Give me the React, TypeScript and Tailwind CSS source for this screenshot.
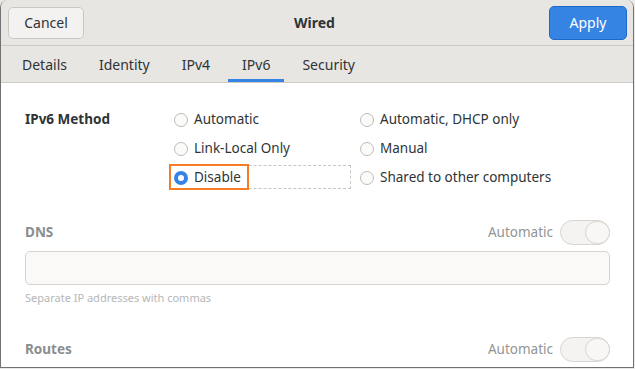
import React from 'react'

const font = { fontFamily: '"Noto Sans", "DejaVu Sans", sans-serif' }

const Radio = ({ checked }: { checked?: boolean }) =>
  checked ? (
    <span className="w-[14px] h-[14px] rounded-full bg-[#3584e4] flex items-center justify-center shrink-0">
      <span className="w-[6px] h-[6px] rounded-full bg-white" />
    </span>
  ) : (
    <span className="w-[14px] h-[14px] rounded-full border border-[#c0bbb6] bg-[#fbfbfa] shrink-0" />
  )

const Option = ({ label, checked, focused }: { label: string; checked?: boolean; focused?: boolean }) => (
  <div className="relative h-[29px] flex items-center pl-[5px]">
    {focused && (
      <>
        <div className="absolute left-0 top-[2px] bottom-[3px] right-0 border border-dashed border-[#c8c5c2]" />
        <div className="absolute left-0 top-[1px] bottom-[2px] w-[80px] border-2 border-[#f57c29]" />
      </>
    )}
    <div className="relative flex items-center gap-[6px]">
      <Radio checked={checked} />
      <span className="text-[13.5px] text-[#2e3436]">{label}</span>
    </div>
  </div>
)

const Switch = () => (
  <div className="w-[50px] h-[25px] rounded-full border border-[#d8d4d0] bg-[#f4f3f1] flex justify-end">
    <div className="w-[25px] h-[23px] rounded-full border border-[#d8d4d0] bg-[#f8f7f6] -mr-px" />
  </div>
)

export default function App() {
  const tabs = ['Details', 'Identity', 'IPv4', 'IPv6', 'Security']
  return (
    <div className="w-[635px] h-[369px] bg-[#e9e9e9]" style={font}>
      <div className="w-[634px] h-[368px] bg-white rounded-t-[8px] border-l border-r border-b border-[#727272] flex flex-col overflow-hidden">
        {/* header */}
        <div className="h-[46px] shrink-0 bg-[#e8e6e3] border-b border-[#cfcac5] flex items-center justify-between pl-[7px] pr-[6px]">
          <button className="w-[76px] h-[32px] rounded-[5px] border border-[#cdc7c2] bg-[#f3f2f0] text-[14px] text-[#2e3436]">
            Cancel
          </button>
          <span className="text-[14px] font-bold text-[#2e3436] -ml-[4px]">Wired</span>
          <button className="w-[78px] h-[34px] rounded-[5px] border border-[#1b6acb] bg-[#3584e4] text-[14px] text-white">
            Apply
          </button>
        </div>
        {/* tabs */}
        <div className="h-[37px] shrink-0 bg-[#e8e6e3] border-b border-[#cfcac5] flex items-stretch pl-[7px]">
          {tabs.map((t) => (
            <div key={t} className="relative px-[14px] mr-[4px] flex items-center text-[14px] text-[#2e3436]">
              {t}
              {t === 'IPv6' && <div className="absolute left-0 right-0 bottom-0 h-[3px] bg-[#3584e4]" />}
            </div>
          ))}
        </div>
        {/* body */}
        <div className="flex-1 pl-[24px] pr-[23px] pt-[22px]">
          <div className="flex">
            <div className="w-[144px] h-[29px] flex items-center text-[13.5px] font-bold text-[#2e3436]">IPv6 Method</div>
            <div className="grid grid-cols-[182px_1fr] gap-x-[4px]">
              <Option label="Automatic" />
              <Option label="Automatic, DHCP only" />
              <Option label="Link-Local Only" />
              <Option label="Manual" />
              <Option label="Disable" checked focused />
              <Option label="Shared to other computers" />
            </div>
          </div>
          <div className="mt-[28px] flex items-center justify-between">
            <span className="text-[13.5px] font-bold text-[#8b8e8f]">DNS</span>
            <div className="flex items-center gap-[7px]">
              <span className="text-[13.5px] text-[#929595]">Automatic</span>
              <Switch />
            </div>
          </div>
          <div className="mt-[6px] h-[34px] rounded-[5px] border border-[#d6d2ce] bg-[#faf9f8]" />
          <div className="mt-[5px] h-[17px] text-[11px] text-[#b5b7b7]">Separate IP addresses with commas</div>
          <div className="mt-[30px] flex items-center justify-between">
            <span className="text-[13.5px] font-bold text-[#8b8e8f]">Routes</span>
            <div className="flex items-center gap-[7px]">
              <span className="text-[13.5px] text-[#929595]">Automatic</span>
              <Switch />
            </div>
          </div>
        </div>
      </div>
    </div>
  )
}
